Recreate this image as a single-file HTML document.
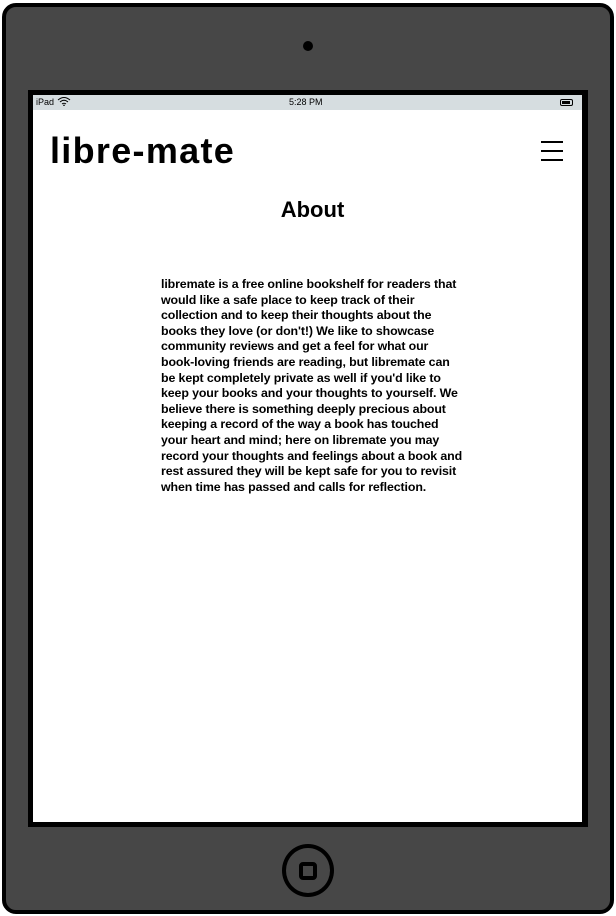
<!DOCTYPE html>
<html><head><style>
*{margin:0;padding:0;box-sizing:border-box}
body{width:616px;height:916px;background:#fff;position:relative;overflow:hidden;font-family:"Liberation Sans",sans-serif}
.dev{position:absolute;left:2px;top:3px;width:612px;height:911px;background:#474747;border:4px solid #000;border-radius:14px}
.cam{position:absolute;left:303px;top:41px;width:10px;height:10px;border-radius:50%;background:#000}
.frame{position:absolute;left:28px;top:90px;width:560px;height:737px;background:#000}
.screen{position:absolute;left:33px;top:95px;width:549px;height:727px;background:#fff}
.sb{position:absolute;left:0;top:0;width:549px;height:15px;background:#d6dde0;font-size:9px;line-height:15px}
.logo{position:absolute;left:17px;top:35px;font-size:36px;font-weight:bold;letter-spacing:1.3px;color:#000}
.burger{position:absolute;left:508px;top:46px;width:22px}
.burger div{height:2px;background:#000;margin-bottom:7px}
h1{position:absolute;left:5px;width:549px;top:102px;text-align:center;font-size:22px;font-weight:bold}
.txt{position:absolute;left:128px;top:182px;font-size:12.4px;line-height:15.6px;font-weight:bold;color:#000;white-space:nowrap;letter-spacing:-0.12px}
.home{position:absolute;left:282px;top:844px;width:52px;height:53px;border:4px solid #000;border-radius:50%}
.home div{position:absolute;left:13px;top:14px;width:18px;height:18px;border:4px solid #000;border-radius:4px}
</style></head><body>
<div class="dev"></div>
<div class="cam"></div>
<div class="frame"></div>
<div class="screen">
<div class="sb"><span style="position:absolute;left:3px">iPad
<svg width="14" height="10" viewBox="0 0 14 10" style="vertical-align:-1px"><path d="M1 4Q7 -1 13 4M3 6Q7 2.5 11 6M5 8Q7 6.5 9 8" fill="none" stroke="#000" stroke-width="1"/><circle cx="7" cy="9.3" r="0.8"/></svg></span>
<span style="position:absolute;left:256px">5:28 PM</span>
<span style="position:absolute;left:527px;top:4px;width:13px;height:7px;border:1px solid #000;border-radius:2px"><span style="position:absolute;left:1px;top:1px;width:8px;height:3px;background:#000"></span></span></div>
<div class="logo">libre-mate</div>
<div class="burger"><div></div><div></div><div></div></div>
<h1>About</h1>
<div class="txt">libremate is a free online bookshelf for readers that<br>would like a safe place to keep track of their<br>collection and to keep their thoughts about the<br>books they love (or don't!) We like to showcase<br>community reviews and get a feel for what our<br>book-loving friends are reading, but libremate can<br>be kept completely private as well if you'd like to<br>keep your books and your thoughts to yourself. We<br>believe there is something deeply precious about<br>keeping a record of the way a book has touched<br>your heart and mind; here on libremate you may<br>record your thoughts and feelings about a book and<br>rest assured they will be kept safe for you to revisit<br>when time has passed and calls for reflection.</div>
</div>
<div class="home"><div></div></div>
</body></html>
